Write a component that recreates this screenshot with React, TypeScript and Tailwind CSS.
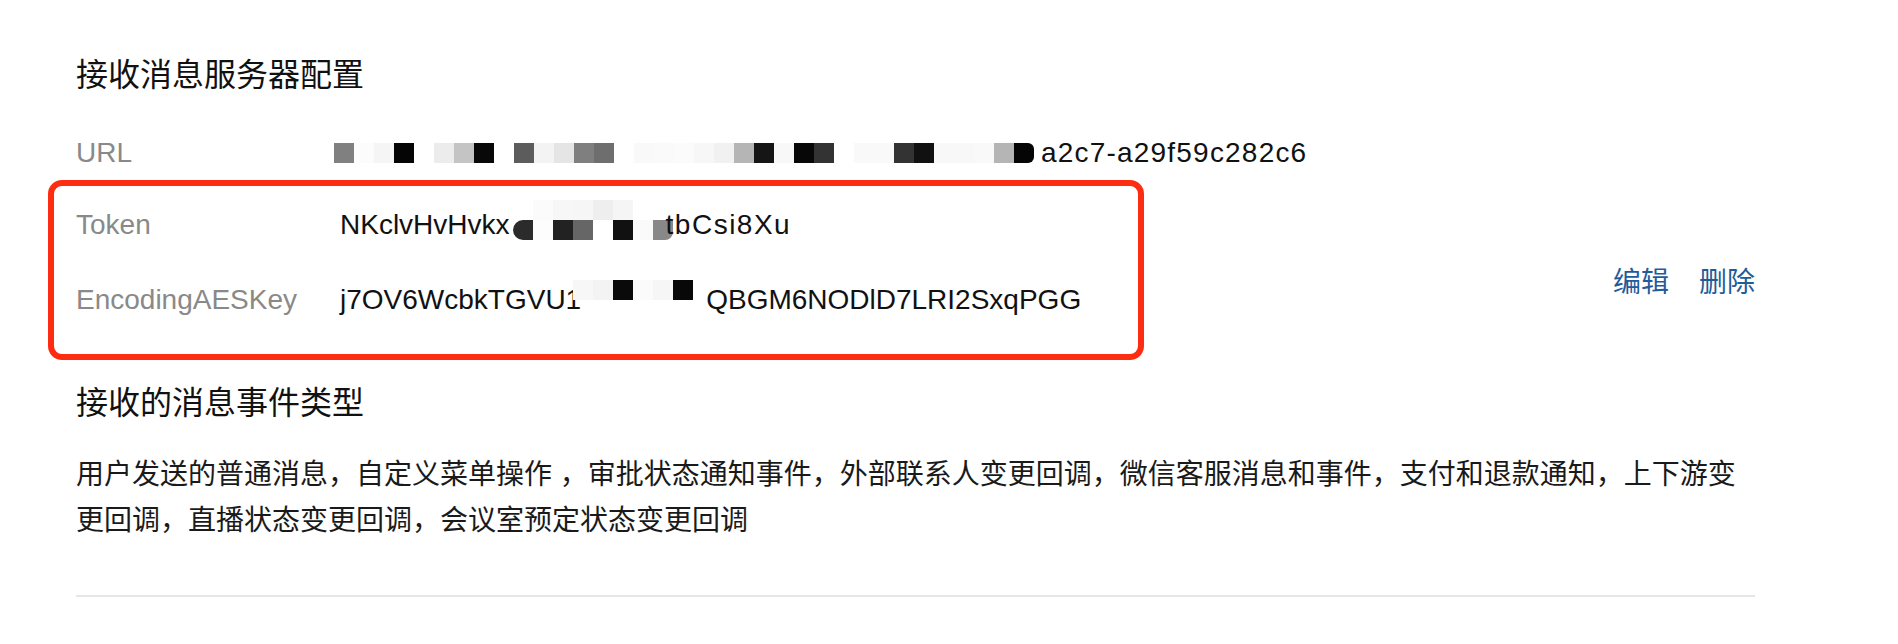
import React from "react";

const urlCells = [
  "#808080", "#fcfcfc", "#f5f5f5", "#050505", "#ffffff", "#ececec", "#c4c4c4", "#080808",
  "#ffffff", "#5c5c5c", "#f3f3f3", "#e5e5e5", "#7f7f7f", "#6e6e6e", "#ffffff", "#f9f9f9",
  "#fafafa", "#fbfbfb", "#f7f7f7", "#f1f1f1", "#b5b5b5", "#151515", "#f8f8f8", "#070707",
  "#333333", "#ffffff", "#f9f9f9", "#f9f9f9", "#333333", "#111111", "#f8f8f8", "#f8f8f8",
  "#f9f9f9", "#b5b5b5", "#050505",
];

const tokenUpper = ["#ffffff", "#fbfbfb", "#f7f7f7", "#f6f6f6", "#eeeeee", "#f5f5f5", "#ffffff", "#ffffff"];
const tokenLower = ["#2b2b2b", "#fdfdfd", "#222222", "#666666", "#ffffff", "#111111", "#fafafa", "#888888"];

const aesCells = ["#f7f7f7", "#f3f3f3", "#0a0a0a", "#fbfbfb", "#f6f6f6", "#080808"];

function Row({ label, children, className = "" }: { label: string; children: React.ReactNode; className?: string }) {
  return (
    <div className={"flex items-center h-[44px] text-[28px] leading-[44px] " + className}>
      <div className="w-[264px] shrink-0 text-[#898989]">{label}</div>
      <div className="flex items-center text-[#111111] whitespace-nowrap">{children}</div>
    </div>
  );
}

export default function App() {
  return (
    <div className="w-[1898px] h-[644px] bg-white overflow-hidden font-['Liberation_Sans','Noto_Sans_CJK_SC',sans-serif]">
      <div className="ml-[76px] w-[1679px] pt-[53px]">
        <h2 className="text-[32px] leading-[44px] text-[#111111] font-normal">接收消息服务器配置</h2>

        <div className="flex mt-[34px]">
          <div className="flex flex-col">
            <Row label="URL">
              <div className="flex -ml-[6px] h-[20px]">
                {urlCells.map((c, i) => (
                  <div
                    key={i}
                    className={"w-[20px] h-[20px] " + (i === urlCells.length - 1 ? "rounded-r-[6px]" : "")}
                    style={{ backgroundColor: c }}
                  />
                ))}
              </div>
              <span className="ml-[7px] tracking-[1.2px]">a2c7-a29f59c282c6</span>
            </Row>

            <div className="mt-[5px] -ml-[28px] pl-[22px] w-[1096px] border-[6px] border-[#fe2c10] rounded-[14px] pt-[17px] pb-[32px]">
              <Row label="Token">
                <span>NKclvHvHvkx</span>
                <div className="relative -top-[5px] flex flex-col ml-[3px]">
                  <div className="flex">
                    {tokenUpper.map((c, i) => (
                      <div key={i} className="w-[20px] h-[20px]" style={{ backgroundColor: c }} />
                    ))}
                  </div>
                  <div className="flex">
                    {tokenLower.map((c, i) => (
                      <div
                        key={i}
                        className={
                          "w-[20px] h-[20px] " +
                          (i === 0 ? "rounded-l-[10px] " : "") +
                          (i === tokenLower.length - 1 ? "rounded-br-[8px]" : "")
                        }
                        style={{ backgroundColor: c }}
                      />
                    ))}
                  </div>
                </div>
                <span className="relative -ml-[7px] tracking-[1.5px]">tbCsi8Xu</span>
              </Row>

              <Row label="EncodingAESKey" className="mt-[31px]">
                <span>j7OV6WcbkTGVU1</span>
                <div className="relative -top-[10px] flex -ml-[8px]">
                  {aesCells.map((c, i) => (
                    <div key={i} className="w-[20px] h-[20px]" style={{ backgroundColor: c }} />
                  ))}
                </div>
                <span className="ml-[13px]">QBGM6NODlD7LRI2SxqPGG</span>
              </Row>
            </div>
          </div>

          <div className="ml-auto mt-[130px] flex gap-[30px] h-[44px] text-[28px] leading-[44px] text-[#1f5c99]">
            <span>编辑</span>
            <span>删除</span>
          </div>
        </div>

        <h2 className="mt-[21px] text-[32px] leading-[44px] text-[#111111] font-normal">接收的消息事件类型</h2>

        <p className="mt-[27px] text-[28px] leading-[46px] text-[#1a1a1a]">
          用户发送的普通消息，自定义菜单操作 ，审批状态通知事件，外部联系人变更回调，微信客服消息和事件，支付和退款通知，上下游变更回调，直播状态变更回调，会议室预定状态变更回调
        </p>

        <div className="mt-[51px] h-[2px] bg-[#e6e6ea]" />
      </div>
    </div>
  );
}
